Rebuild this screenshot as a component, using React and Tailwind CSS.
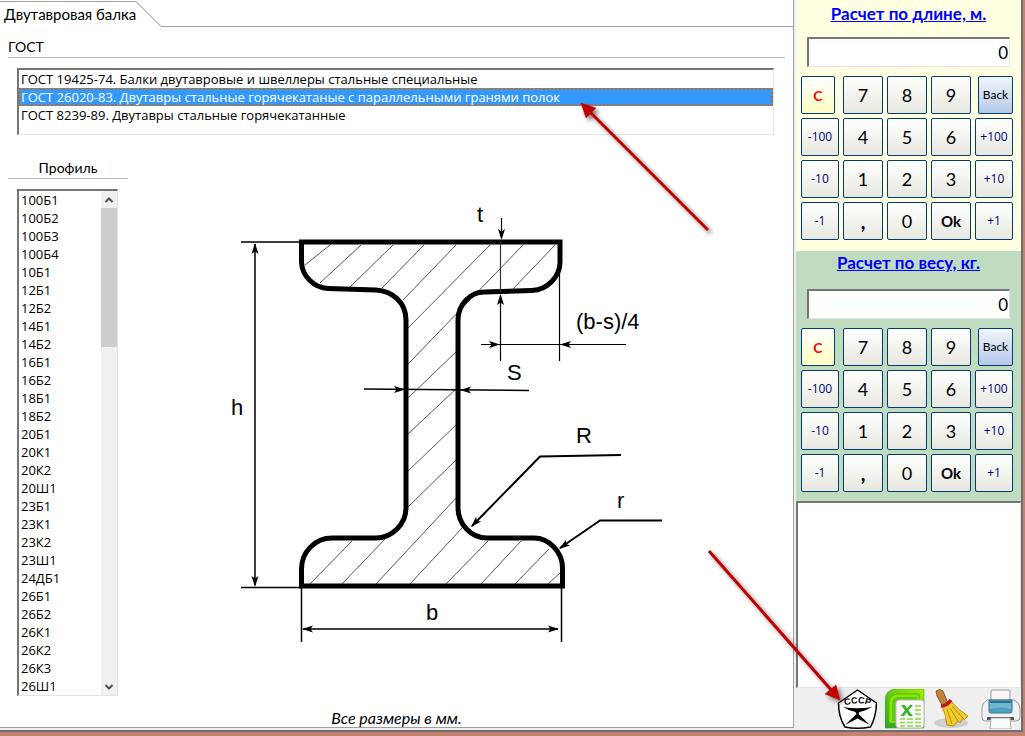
import React, { useState } from "react";
import clsx from "clsx";

const STANDARDS = [
  "ГОСТ 19425-74. Балки двутавровые и швеллеры стальные специальные",
  "ГОСТ 26020-83. Двутавры стальные горячекатаные с параллельными гранями полок",
  "ГОСТ 8239-89. Двутавры стальные горячекатанные",
];

const PROFILES = [
  "100Б1", "100Б2", "100Б3", "100Б4", "10Б1", "12Б1", "12Б2",
  "14Б1", "14Б2", "16Б1", "16Б2", "18Б1", "18Б2", "20Б1",
  "20К1", "20К2", "20Ш1", "23Б1", "23К1", "23К2", "23Ш1",
  "24ДБ1", "26Б1", "26Б2", "26К1", "26К2", "26К3", "26Ш1",
];

const KEYS = [
  "C", "7", "8", "9", "Back",
  "-100", "4", "5", "6", "+100",
  "-10", "1", "2", "3", "+10",
  "-1", ",", "0", "Ok", "+1",
];

// hatching inside the section: x1, y1, x2, y2
const HATCH = [
  [330, 245, 305, 265], [361, 245, 320, 283], [393, 245, 350, 287], [424, 245, 382, 288],
  [456, 245, 403, 300], [490, 245, 408, 328], [523, 245, 408, 364], [555, 245, 513, 289],
  [457, 351, 408, 398], [457, 388, 408, 434], [457, 424, 408, 471], [457, 459, 408, 507],
  [352, 541, 310, 584], [386, 538, 342, 584], [457, 497, 376, 584], [462, 528, 410, 584],
  [488, 541, 446, 584], [521, 541, 481, 584], [549, 549, 515, 584], [560, 573, 548, 584],
];

const OUTLINE =
  "M301.5 242V262C302 276 314 288 328 288.500L376 290C392 291 406 302 406 320V508C406 524 392 538 376 538H332C315 538 301.500 552 301.500 569V586H562.500V568C562.500 552 549 538 534 538H487C471 538 458 524 458 508V320C458 304 471 292 484 292L532 290.500C548 290 560 276 560 262V242Z";

const SUNKEN = "border-t-2 border-l-2 border-r border-b border-t-[#767676] border-l-[#767676] border-r-[#e3e3e3] border-b-[#e3e3e3]";

function Arrow({ x, y, angle }) {
  return <path d="M0 0L-11 3.500L-8.500 0L-11 -3.500Z" transform={`translate(${x} ${y}) rotate(${angle})`} />;
}

function BeamDrawing() {
  return (
    <svg viewBox="225 200 445 450" className="w-[445px] h-[450px] shrink-0" aria-label="Сечение двутавровой балки">
      <g stroke="#555" strokeWidth="1">
        {HATCH.map(([x1, y1, x2, y2]) => (
          <line key={`${x1}-${y1}`} x1={x1} y1={y1} x2={x2} y2={y2} />
        ))}
      </g>
      <path d={OUTLINE} fill="none" stroke="#000" strokeWidth="5" />
      <g stroke="#000" strokeWidth="1.500" fill="none">
        <path d="M241 242H301M241 587.500H301M255 244V585" />
        <path d="M301.500 587V642M561.500 587V642M303 629H558" />
        <path d="M501.500 218V238M500.500 295V361M559.500 262V361M481 344.500H626" strokeWidth="1.200" />
        <path d="M500.500 242V292" stroke="#333" strokeWidth="1.200" />
        <path d="M364 389L529 390.500" />
        <path d="M472 526L540 456.500L621 455M560 548L600 520.500H662" strokeWidth="2" />
      </g>
      <g fill="#000">
        <Arrow x={255} y={243} angle={-90} />
        <Arrow x={255} y={587} angle={90} />
        <Arrow x={302} y={629} angle={180} />
        <Arrow x={559} y={629} angle={0} />
        <Arrow x={501.5} y={240} angle={90} />
        <Arrow x={500.5} y={294} angle={-90} />
        <Arrow x={500} y={344.5} angle={0} />
        <Arrow x={560} y={344.5} angle={180} />
        <Arrow x={405} y={389.5} angle={0} />
        <Arrow x={460} y={390} angle={180} />
        <Arrow x={471} y={527} angle={134} />
        <Arrow x={559} y={549} angle={145} />
      </g>
      <g fill="#000" className="font-['Liberation_Sans',sans-serif] text-[22px]">
        <text x="231" y="415">h</text>
        <text x="477" y="222">t</text>
        <text x="576" y="329">(b-s)/4</text>
        <text x="507" y="380">S</text>
        <text x="576" y="443">R</text>
        <text x="617" y="508">r</text>
        <text x="426" y="620">b</text>
      </g>
    </svg>
  );
}

function Key({ label }) {
  const special = ["C", "Back", "Ok", ","].includes(label);
  const step = /^[+-]/.test(label);
  return (
    <button
      type="button"
      className={clsx(
        "h-[38px] rounded-[2px] border border-[#003c74] flex items-center justify-center whitespace-nowrap",
        label === "C" && "w-[34px] text-[14px] font-bold text-[#ff0000] bg-linear-to-b from-white to-[#ffffbe]",
        label === "Back" && "w-[35px] justify-self-end text-[12px] text-black bg-linear-to-b from-[#f2f6fc] to-[#b4c8e8]",
        label === "Ok" && "text-[15px] font-bold",
        label === "," && "text-[20px] font-bold",
        step && "font-['Open_Sans',sans-serif] text-[12px] text-[#000080]",
        !special && !step && "text-[18px] text-black",
        label !== "C" && label !== "Back" && "bg-linear-to-b from-white to-[#e8e8e0]"
      )}
    >
      {label}
    </button>
  );
}

function Calculator({ id, title, className, titleClass }) {
  const [value, setValue] = useState("0");
  return (
    <section className={clsx("px-[5px]", className)}>
      <h2 className={clsx("h-6 flex items-center justify-center", titleClass)}>
        <label htmlFor={id} className="text-[17px] leading-6 font-bold text-[#0000ff] underline">{title}</label>
      </h2>
      <input
        id={id}
        value={value}
        onChange={(e) => setValue(e.target.value)}
        className={clsx("block w-[203px] h-[30px] ml-[6px] mb-[9px] pr-px bg-white text-right text-[17px] text-black outline-none", SUNKEN)}
      />
      <div className="grid grid-cols-[38px_40px_40px_40px_38px] gap-1">
        {KEYS.map((k) => <Key key={k} label={k} />)}
      </div>
    </section>
  );
}

function QualityMark() {
  return (
    <svg viewBox="0 0 40 40" className="w-10 h-10">
      <path d="M20.500 1L39.500 14Q39 28 33.500 38Q20 40.500 8 38Q1.500 28 1.500 14Z" fill="#fff" stroke="#000" strokeWidth="1.500" strokeLinejoin="round" />
      <path d="M6 18Q20 20.500 35 18Q28 22 22.500 23L21.500 25L33 36L20.500 29.500L8 36L19.500 25L18.500 23Q12 22 6 18Z" fill="#000" />
      <path id="mark-arc" d="M6 17.500Q20.500 11 35 17.500" fill="none" />
      <text textAnchor="middle" className="font-['Liberation_Sans',sans-serif] text-[9px] font-bold">
        <textPath href="#mark-arc" startOffset="50%">СССР</textPath>
      </text>
    </svg>
  );
}

function ExcelIcon() {
  return (
    <svg viewBox="0 0 40 40" className="w-10 h-10">
      <defs>
        <linearGradient id="xl" x1="0" y1="1" x2="1" y2="0">
          <stop offset="0" stopColor="#2ea02e" />
          <stop offset="1" stopColor="#a4f000" />
        </linearGradient>
      </defs>
      <path d="M0 39V10Q1 1 10 0H39V39Z" fill="url(#xl)" stroke="#2b9a12" strokeWidth="0.500" />
      <path d="M4 34V13Q5 6 12 5H34V12H15Q11 12 11 16V34Z" fill="#8ee600" stroke="#4fba10" />
      <path d="M7 32V14Q8 9 13 8H32V12H15Q11 12 11 16V32Z" fill="#5cc912" />
      <rect x="11" y="11" width="28" height="28" rx="3" fill="#fafafa" stroke="#bbb" />
      <path d="M16 16H20L22 19.500L25 16H28L23.500 21.500L28 27H24L21.500 23.500L19 27H15.500L20 21.500Z" fill="#39b52a" />
      <path d="M30 17H36M30 21H36M30 25H36M15 30H20M22 30H28M30 30H36M15 33.500H20M22 33.500H28M30 33.500H36M15 37H20M22 37H28M30 37H36" stroke="#8ad943" strokeWidth="1.500" />
    </svg>
  );
}

function BroomIcon() {
  return (
    <svg viewBox="0 0 40 40" className="w-10 h-10">
      <ellipse cx="18" cy="34" rx="17" ry="5" fill="#cfcfcf" />
      <path d="M3 2Q7 -1 10 2L15 14L9 16L4 7Z" fill="#c08238" stroke="#7c4a16" strokeWidth="0.800" />
      <path d="M9 17L18 12Q25 21 35 27L31 31L30 29L27 34L25 32L21 37L14 36Q13 26 9 17Z" fill="#efcb2e" stroke="#a87c10" strokeWidth="0.800" />
      <path d="M14 20L19 35M17 19L25 32M19 17L30 29" stroke="#b98d12" fill="none" />
      <path d="M8 17Q14 17 18 11" fill="none" stroke="#c0161c" strokeWidth="3.500" />
    </svg>
  );
}

function PrinterIcon() {
  return (
    <svg viewBox="0 0 40 40" className="w-10 h-10">
      <path d="M10 14V2Q10 1 11 1H28Q29 1 29 2V14" fill="#f7f7f7" stroke="#9a9a9a" />
      <path d="M6 11H33Q39 14 39 19V28Q39 32 35 32H4Q1 32 1 28V19Q1 14 6 11Z" fill="#f2f2f2" stroke="#999" />
      <path d="M8 11H31V22Q31 24 29 24H10Q8 24 8 22Z" fill="#6fb6cf" stroke="#2a6b84" />
      <path d="M9 12H30V14H9Z" fill="#28718c" />
      <path d="M9 20Q20 17 30 20V23H9Z" fill="#4fa0bd" />
      <path d="M6 28H33V31H6Z" fill="#555" />
      <path d="M10 29H29L30 40H9Z" fill="#fbfbfb" stroke="#aaa" />
    </svg>
  );
}

const TOOLS = [
  { name: "Справка ГОСТ", icon: QualityMark },
  { name: "Экспорт в Excel", icon: ExcelIcon },
  { name: "Очистить", icon: BroomIcon },
  { name: "Печать", icon: PrinterIcon },
];

function Pointers() {
  return (
    <svg viewBox="0 0 1025 736" className="absolute left-0 top-0 w-[1025px] h-[736px] pointer-events-none" aria-hidden="true">
      <defs>
        <filter id="shadow" x="-10%" y="-10%" width="130%" height="130%">
          <feDropShadow dx="3" dy="3" stdDeviation="2" floodColor="#000" floodOpacity="0.500" />
        </filter>
      </defs>
      <g filter="url(#shadow)" fill="#c00000" stroke="#c00000">
        <path d="M588 110L708 230M709 551L833 692" strokeWidth="3" />
        <path d="M581 103L596 108L586 118ZM840 700L836 685L825 694Z" strokeWidth="0.500" />
      </g>
    </svg>
  );
}

export default function App() {
  const [standard, setStandard] = useState(1);
  const [profile, setProfile] = useState(null);

  return (
    <div className="relative min-h-screen flex bg-[#c48272] pr-[2px] pb-[4px] font-['Lato','Noto_Sans',sans-serif] text-[13px] text-black">
      <div className="flex-1 flex border-r-2 border-b-2 border-[#6e6e6e] bg-[#efefef]">
        <main className="flex-1 flex flex-col mb-[2px] mr-[2px] bg-white border-r border-b border-[#a0a0a0]">
          {/* Tab */}
          <div className="flex h-[27px] pt-px">
            <button type="button" className="border-t border-[#a0a0a0] pl-1 text-[15px] whitespace-nowrap">Двутавровая балка</button>
            <svg viewBox="0 0 25 26" className="w-[25px] h-[26px]">
              <path d="M0 0.500L25 25.500" stroke="#888" fill="none" />
            </svg>
            <div className="flex-1 border-b border-[#a0a0a0]" />
          </div>

          {/* Standards */}
          <h2 id="gost" className="mx-2 h-[31px] pt-[9px] border-b border-[#b8b8b8] text-[14px] leading-[22px]">ГОСТ</h2>
          <ul role="listbox" aria-labelledby="gost" className={clsx("ml-[17px] mr-[19px] mt-[10px] h-[67px] font-['Open_Sans',sans-serif]", SUNKEN)}>
            {STANDARDS.map((s, i) => (
              <li
                key={s}
                role="option"
                aria-selected={i === standard}
                onClick={() => setStandard(i)}
                className={clsx(
                  "h-[18px] leading-[14px] border-2 whitespace-nowrap",
                  i === standard ? "bg-[#3399ff] text-white border-dotted border-[#c8690c]" : "border-transparent"
                )}
              >
                {s}
              </li>
            ))}
          </ul>

          <div className="flex mt-[22px]">
            {/* Profiles */}
            <div className="w-[120px] ml-2 shrink-0">
              <h2 id="profile" className="h-[22px] border-b border-[#b8b8b8] text-[14px] leading-[22px] text-center">Профиль</h2>
              <div className={clsx("flex w-[101px] ml-[9px] mt-[10px]", SUNKEN)}>
                <ul role="listbox" aria-labelledby="profile" className="flex-1 font-['Open_Sans',sans-serif]">
                  {PROFILES.map((p) => (
                    <li
                      key={p}
                      role="option"
                      aria-selected={p === profile}
                      onClick={() => setProfile(p)}
                      className={clsx("h-[18px] pl-[2px] leading-[18px]", p === profile && "bg-[#3399ff] text-white")}
                    >
                      {p}
                    </li>
                  ))}
                </ul>
                <div className="w-4 bg-[#f0f0f0] flex flex-col">
                  <svg viewBox="0 0 16 17" className="w-4 h-[17px]"><path d="M4.500 11L8 7.500L11.500 11" stroke="#505050" strokeWidth="2" fill="none" /></svg>
                  <div className="h-[139px] bg-[#cdcdcd]" />
                  <svg viewBox="0 0 16 17" className="w-4 h-[17px] mt-auto"><path d="M4.500 7L8 10.500L11.500 7" stroke="#505050" strokeWidth="2" fill="none" /></svg>
                </div>
              </div>
            </div>
            <div className="pl-[97px] pt-[43px]">
              <BeamDrawing />
            </div>
          </div>
          <p className="mt-[13px] text-center text-[16px] leading-[18px] italic">Все размеры в мм.</p>
        </main>

        <aside className="w-[225px] shrink-0 flex flex-col">
          <Calculator id="length" title="Расчет по длине, м." className="bg-[#ffffe1] pt-[2px] pb-[11px]" titleClass="mb-[11px]" />
          <Calculator id="weight" title="Расчет по весу, кг." className="bg-[#c0dcc0] pb-[9px]" titleClass="mb-[14px]" />
          <textarea
            aria-label="Результаты"
            className={clsx("flex-1 min-h-[120px] resize-none bg-white outline-none", SUNKEN)}
          />
          <div className="flex justify-end gap-2 py-px">
            {TOOLS.map(({ name, icon: Icon }) => (
              <button key={name} type="button" aria-label={name}><Icon /></button>
            ))}
          </div>
        </aside>
      </div>
      <Pointers />
    </div>
  );
}
